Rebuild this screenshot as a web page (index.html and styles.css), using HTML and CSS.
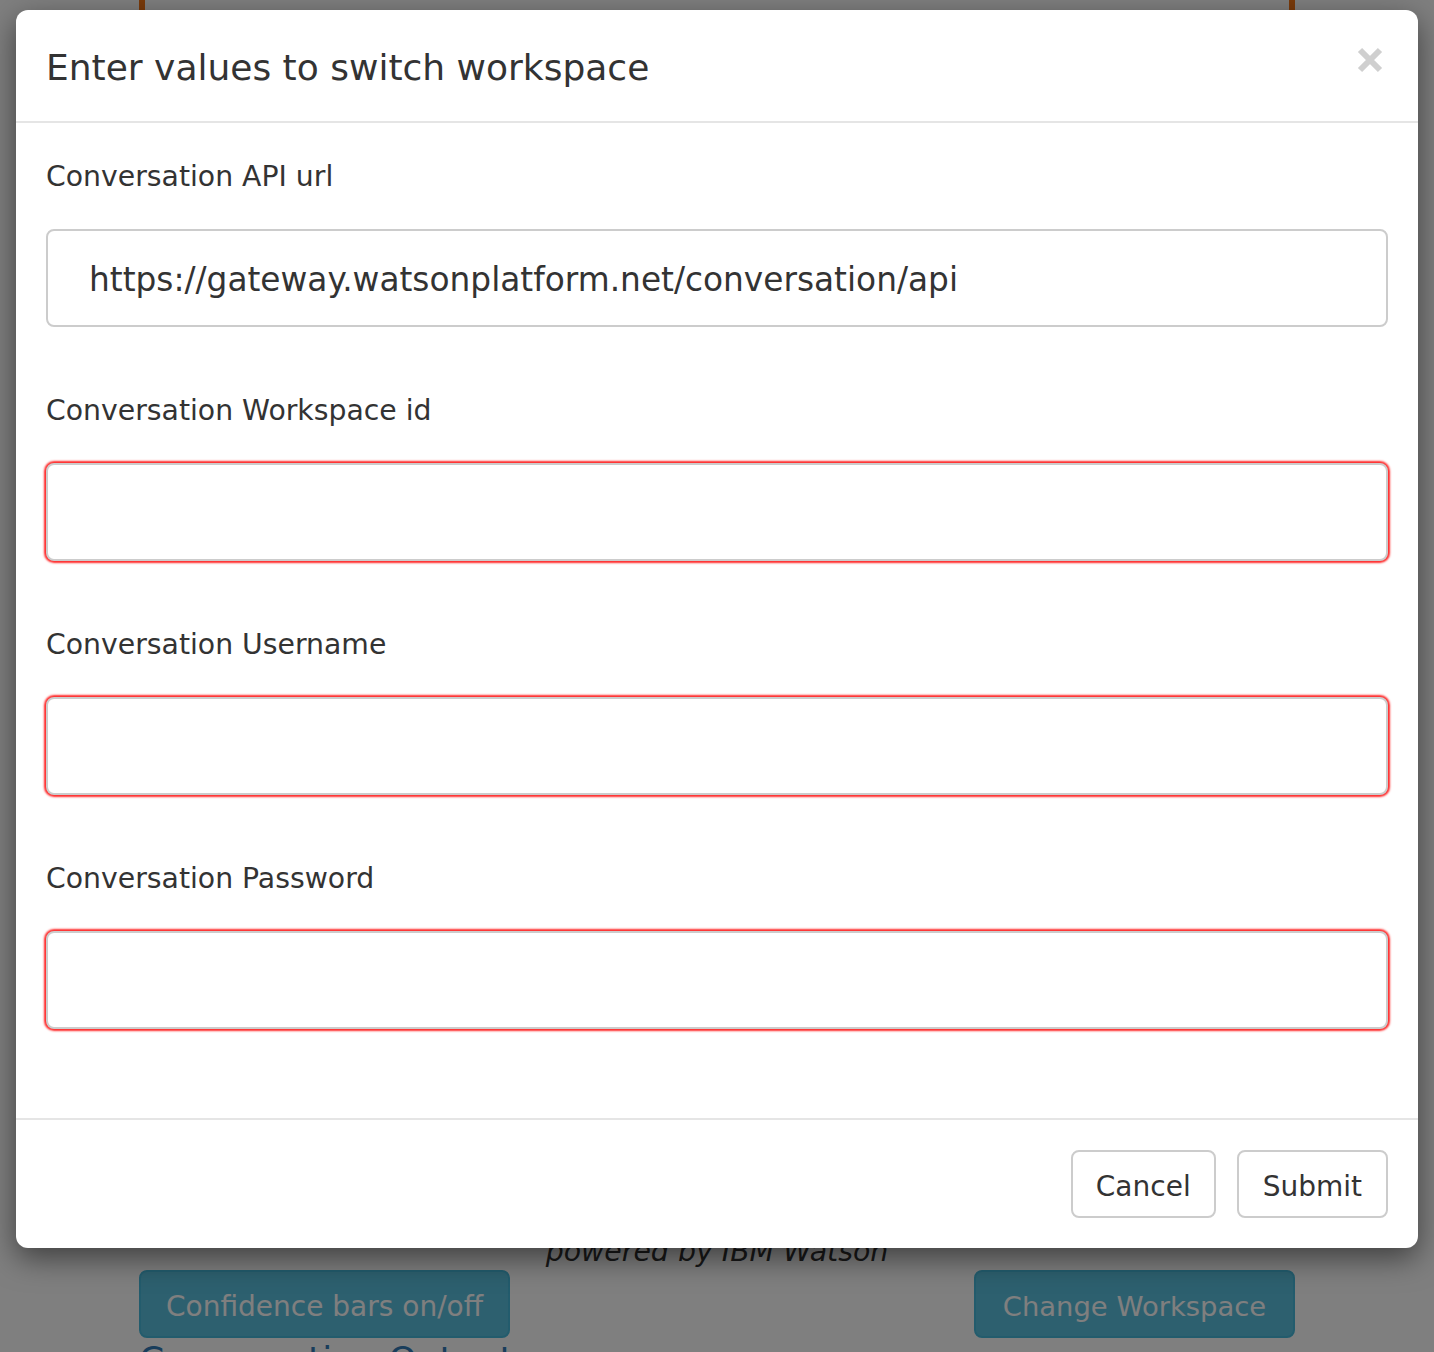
FILE: index.html
```html
<!DOCTYPE html>
<html lang="en">
<head>
<meta charset="utf-8">
<title>Switch workspace</title>
<link rel="stylesheet" href="styles.css">
</head>
<body>
<div class="page">
  <div class="chat-box"></div>
  <p class="powered">powered by IBM Watson</p>
  <div class="actions">
    <button class="btn-info btn-conf">Confidence bars on/off</button>
    <button class="btn-info btn-change">Change Workspace</button>
  </div>
  <h2 class="output-title">Conversation Output</h2>
</div>

<div class="overlay">
  <div class="modal">
    <div class="modal-header">
      <h4 class="modal-title">Enter values to switch workspace</h4>
      <button class="close" aria-label="Close">
        <svg width="26" height="26" viewBox="0 0 26 26"><path d="M3 3 L23 23 M23 3 L3 23" stroke="#cfcfcf" stroke-width="6" stroke-linecap="butt"/></svg>
      </button>
    </div>
    <div class="modal-body">
      <div class="form-group">
        <label class="field-label">Conversation API url</label>
        <input class="field" type="text" value="https://gateway.watsonplatform.net/conversation/api">
      </div>
      <div class="form-group">
        <label class="field-label">Conversation Workspace id</label>
        <input class="field invalid" type="text">
      </div>
      <div class="form-group">
        <label class="field-label">Conversation Username</label>
        <input class="field invalid" type="text">
      </div>
      <div class="form-group">
        <label class="field-label">Conversation Password</label>
        <input class="field invalid" type="password">
      </div>
    </div>
    <div class="modal-footer">
      <button class="btn">Cancel</button>
      <button class="btn btn-submit">Submit</button>
    </div>
  </div>
</div>
</body>
</html>
```
FILE: styles.css
```css
html, body {
  margin: 0;
  padding: 0;
}
body {
  font-family: "DejaVu Sans", Verdana, sans-serif;
  color: #333;
  background: #fff;
  height: 1352px;
  overflow: hidden;
  position: relative;
}
.page {
  width: 1156px;
  margin: 0 auto;
}
.chat-box {
  height: 1234px;
  border-left: 6px solid #f47414;
  border-right: 6px solid #f47414;
  box-sizing: border-box;
}
.powered {
  margin: 0;
  text-align: center;
  font-style: italic;
  font-size: 28.4px;
  line-height: 36px;
  color: #333;
}
.actions {
  display: flex;
  justify-content: space-between;
}
.btn-info {
  font-family: inherit;
  font-size: 28px;
  line-height: 40px;
  height: 68px;
  padding: 15px 0 9px;
  white-space: nowrap;
  text-align: center;
  color: #fff;
  background: #5bc0de;
  border: 2px solid #46b8da;
  border-radius: 8px;
}
.btn-conf { width: 371px; }
.btn-change { width: 321px; font-size: 27.4px; }
.output-title {
  margin: 0;
  font-size: 36px;
  line-height: 43px;
  font-weight: normal;
  color: #337ab7;
}

.overlay {
  position: absolute;
  inset: 0;
  background: rgba(0, 0, 0, 0.5);
}
.modal {
  width: 1402px;
  margin: 10px auto 0;
  background: #fff;
  border-radius: 12px;
  box-shadow: 0 10px 30px rgba(0, 0, 0, 0.5);
}
.modal-header {
  display: flex;
  justify-content: space-between;
  align-items: flex-start;
  padding: 32px 30px 28px;
  border-bottom: 2px solid #e5e5e5;
}
.modal-title {
  margin: 0;
  font-size: 36px;
  line-height: 51px;
  font-weight: normal;
  color: #333;
}
.close {
  border: 0;
  background: none;
  padding: 0;
  margin: 5px 5px 0 0;
  width: 26px;
  height: 26px;
  display: block;
}
.close svg { display: block; }
.modal-body {
  padding: 34px 30px 25px;
}
.form-group {
  margin-bottom: 64px;
}
.field-label {
  display: block;
  font-size: 28.3px;
  line-height: 40px;
  margin-bottom: 32px;
  color: #333;
}
.field {
  display: block;
  box-sizing: border-box;
  width: 100%;
  height: 98px;
  margin: 0;
  padding: 4px 41px 0;
  font-family: inherit;
  font-size: 32.8px;
  color: #333;
  background: #fff;
  border: 2px solid #ccc;
  border-radius: 8px;
  outline: none;
}
.field.invalid {
  box-shadow: 0 0 2px 2px rgba(255, 20, 20, 0.9);
}
.modal-footer {
  display: flex;
  justify-content: flex-end;
  gap: 21px;
  padding: 30px;
  border-top: 2px solid #e5e5e5;
}
.btn {
  font-family: inherit;
  font-size: 28px;
  line-height: 40px;
  height: 68px;
  padding: 15px 23px 9px;
  color: #333;
  background: #fff;
  border: 2px solid #ccc;
  border-radius: 8px;
}
.btn-submit {
  padding: 15px 24px 9px;
}
```
